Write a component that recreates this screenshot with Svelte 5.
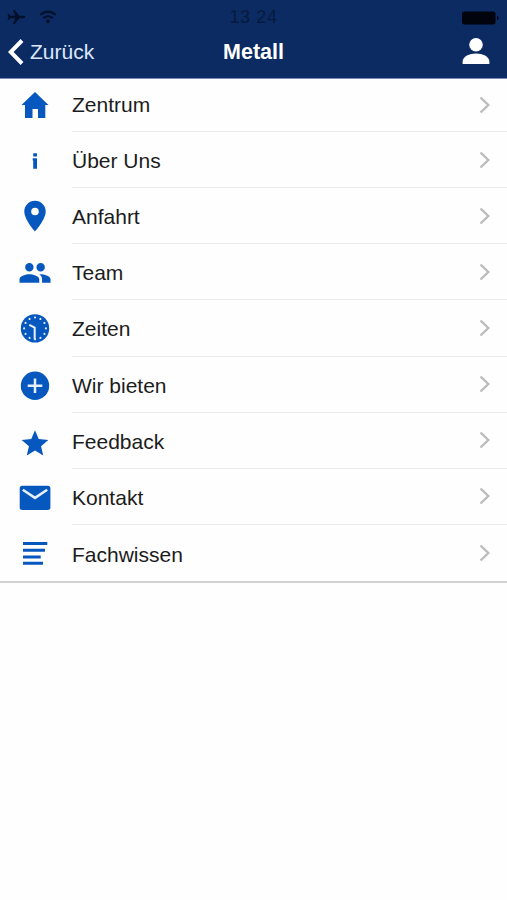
<script>
    const items = [
        { icon: 'home', label: 'Zentrum' },
        { icon: 'info', label: 'Über Uns' },
        { icon: 'pin', label: 'Anfahrt' },
        { icon: 'team', label: 'Team' },
        { icon: 'clock', label: 'Zeiten' },
        { icon: 'plus', label: 'Wir bieten' },
        { icon: 'star', label: 'Feedback' },
        { icon: 'mail', label: 'Kontakt' },
        { icon: 'lines', label: 'Fachwissen' }
    ];

    const hours = Array.from({ length: 12 }, (_, i) => i * 30);
</script>

<header>
    <div class="status">
        <div class="signals">
            <svg width="19" height="16" viewBox="0 0 19 16">
                <path d="M18.3 8c0-.8-.8-1.2-1.8-1.2h-4.2L7.7 1H6l2 5.8H3.6L1.8 4.9H.5L1.4 8l-.9 3.1h1.3l1.8-1.9H8L6 15h1.7l4.6-5.8h4.2c1 0 1.8-.4 1.8-1.2z" />
            </svg>
            <svg class="wifi" width="18" height="14" viewBox="0 0 18 14">
                <path d="M1.2 4.8Q9-1.6 16.8 4.8M4.4 8.2q4.6-3.9 9.2 0" />
                <circle cx="9" cy="11.3" r="1.9" />
            </svg>
        </div>
        <span class="time">13 24</span>
        <svg class="battery" width="40" height="16" viewBox="0 0 40 16">
            <rect x="1" y="1.5" width="33.5" height="13" rx="2.5" />
            <path d="M36 5.5q3 2.5 0 5z" />
        </svg>
    </div>
    <nav>
        <button class="back">
            <svg width="16" height="26" viewBox="0 0 16 26">
                <path d="M14 1.5 2.7 13 14 24.5" />
            </svg>
            <span>Zurück</span>
        </button>
        <h1>Metall</h1>
        <button class="profile" aria-label="Profil">
            <svg width="28" height="28" viewBox="0 0 28 28">
                <circle cx="14" cy="7.7" r="6.8" />
                <path d="M.6 27v-2.2c0-5.3 7-8.2 13.4-8.2s13.4 2.9 13.4 8.2V27z" />
            </svg>
        </button>
    </nav>
</header>

<ul>
    {#each items as item}
        <li>
            <svg class="icon" width="36" height="36" viewBox="0 0 36 36">
                {#if item.icon === 'home'}
                    <path d="M18 4 31.5 17h-3.2v13H21v-9h-5.500v9H8V17H4.5z" />
                {:else if item.icon === 'info'}
                    <path d="M16.2 11.2H20v3.2h-3.8zM15.7 16.3H20v10.400h-3.8v-8.2h-.5z" />
                {:else if item.icon === 'pin'}
                    <path transform="translate(-.36 -.26) scale(1.53)" d="M12 2C8.13 2 5 5.13 5 9c0 5.25 7 13 7 13s7-7.75 7-13c0-3.87-3.13-7-7-7zm0 9.5a2.5 2.5 0 0 1 0-5 2.5 2.5 0 0 1 0 5z" />
                {:else if item.icon === 'team'}
                    <path transform="translate(1.1 1.9) scale(1.41)" d="M16 11c1.66 0 2.99-1.34 2.99-3S17.66 5 16 5s-3 1.34-3 3 1.34 3 3 3zm-8 0c1.66 0 2.99-1.34 2.99-3S9.66 5 8 5 5 6.34 5 8s1.34 3 3 3zm0 2c-2.33 0-7 1.17-7 3.5V19h14v-2.5C15 14.17 10.33 13 8 13zm8 0c-.29 0-.62.02-.97.05 1.16.84 1.97 1.97 1.97 3.45V19h6v-2.5c0-2.33-4.67-3.5-7-3.5z" />
                {:else if item.icon === 'clock'}
                    <circle cx="18" cy="18.4" r="14.2" />
                    {#each hours as angle}
                        <circle class="dot" cx="18" cy="7.5" r="1.1" transform="rotate({angle} 18 18.4)" />
                    {/each}
                    <path class="hands" d="M12.3 14.8 17.7 17.6V29.2" />
                {:else if item.icon === 'plus'}
                    <circle cx="18" cy="18.8" r="14.2" />
                    <path class="cross" d="M10.7 18.8h14.6M18 11.5v14.6" />
                {:else if item.icon === 'star'}
                    <path transform="translate(2 4.6) scale(1.333)" d="M12 17.27 18.18 21l-1.64-7.03L22 9.24l-7.19-.61L12 2 9.19 8.63 2 9.24l5.46 4.73L5.82 21z" />
                {:else if item.icon === 'mail'}
                    <rect x="2.7" y="6.8" width="30.7" height="24.2" rx="2.6" />
                    <path class="flap" d="M5.8 10.7 18 18.9l12.2-8.2" />
                {:else}
                    <path d="M6 7.1h24.3v3H6zM6 13.7h22v3H6zM6 20.4h17.7v3H6zM6 26.7h20v3H6z" />
                {/if}
            </svg>
            <div class="cell">
                <span>{item.label}</span>
                <svg class="chevron" width="12" height="18" viewBox="0 0 12 18">
                    <path d="M1.5 1.5 9.3 9l-7.8 7.5" />
                </svg>
            </div>
        </li>
    {/each}
</ul>

<style>
    :global(body) {
        margin: 0;
        background: #fefefe;
        font-family: "Liberation Sans", Arial, sans-serif;
    }

    header {
        box-sizing: border-box;
        height: 79px;
        padding-top: 7px;
        background: #0b2b62;
        border-bottom: 1px solid #7d8bb8;
    }

    .status, nav {
        display: grid;
        grid-template-columns: 1fr auto 1fr;
        align-items: center;
    }

    .status {
        height: 18px;
        padding: 0 7px;
        fill: #03102a;
    }

    .signals {
        display: flex;
        align-items: center;
        gap: 13px;
        padding-bottom: 1px;
    }

    .wifi path {
        fill: none;
        stroke: #03102a;
        stroke-width: 2;
    }

    .time {
        color: #071a3e;
        font-size: 18px;
        letter-spacing: 0.6px;
    }

    .battery {
        justify-self: end;
        margin-right: -1px;
        fill: #01040c;
    }

    nav {
        height: 50px;
        padding: 2px 8px 0;
    }

    button {
        display: flex;
        align-items: center;
        padding: 0;
        border: 0;
        background: none;
        color: #dce7fb;
        font: inherit;
        font-size: 21px;
    }

    .back {
        gap: 6px;
    }

    .back path {
        fill: none;
        stroke: #fff;
        stroke-width: 4;
    }

    h1 {
        margin: 0;
        color: #fff;
        font-size: 21.5px;
    }

    .profile {
        justify-self: end;
        margin: 0 9px 2px 0;
        fill: #fff;
    }

    ul {
        margin: 0;
        padding: 0;
        list-style: none;
        border-bottom: 2px solid #d2d2d2;
    }

    li {
        display: flex;
        align-items: center;
        height: 56.15px;
        padding-left: 17px;
    }

    li:first-child {
        height: 53px;
    }

    .icon {
        flex: none;
        margin-right: 19px;
        fill: #0758be;
    }

    .dot {
        fill: #d9e8fc;
    }

    .hands, .cross, .flap {
        fill: none;
        stroke: #e6f0fd;
        stroke-width: 2.5;
    }

    .hands {
        stroke-width: 2;
    }

    .cell {
        display: flex;
        flex: 1;
        align-items: center;
        justify-content: space-between;
        box-sizing: border-box;
        height: 100%;
        padding-right: 16px;
        border-bottom: 1px solid #ebebeb;
        color: #1c1c1c;
        font-size: 21px;
    }

    .cell span {
        padding-top: 3px;
    }

    li:first-child span {
        padding-top: 0;
    }

    li:last-child .cell {
        border-bottom: 0;
    }

    .chevron path {
        fill: none;
        stroke: #bcbcbc;
        stroke-width: 2.4;
    }
</style>
